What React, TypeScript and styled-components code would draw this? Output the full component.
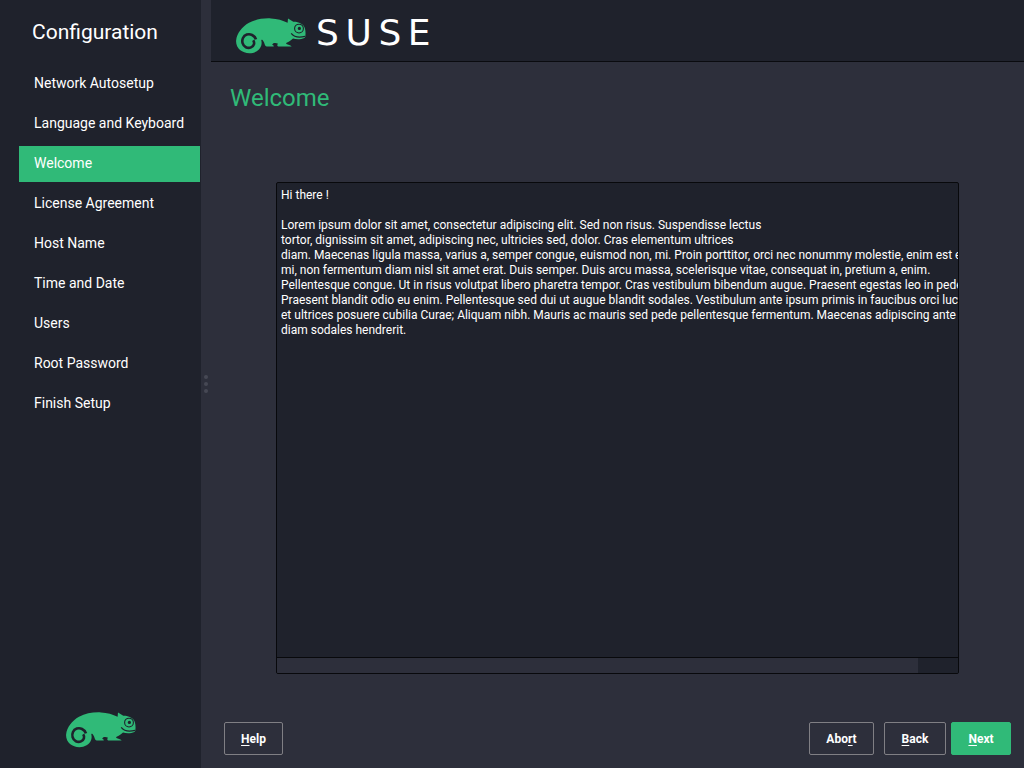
import React from "react";
import styled, { createGlobalStyle } from "styled-components";

const Global = createGlobalStyle`
  html, body { margin: 0; padding: 0; height: 100%; background: #2d2f3b; }
  #root { height: 100%; }
  body { font-family: Roboto, "Liberation Sans", sans-serif; overflow: hidden; }
`;

const Shell = styled.div`
  width: 1024px; height: 768px; display: flex; position: relative; overflow: hidden;
  background: #2d2f3b; color: #fff;
`;
const Sidebar = styled.aside`
  width: 201px; flex: none; background: #1f222c; display: flex; flex-direction: column;
  padding-left: 19px; box-sizing: border-box;
`;
const SideTitle = styled.h1`
  margin: 18px 0 0 13px; font-size: 21px; font-weight: 400; line-height: 28px; height: 28px;
`;
const Steps = styled.ul`
  list-style: none; margin: 20px 0 0; padding: 0; display: flex; flex-direction: column; gap: 4px;
`;
const Step = styled.li<{ $active?: boolean }>`
  height: 36px; width: 181px; line-height: 34px; padding-left: 15px; box-sizing: border-box;
  font-size: 14px; background: ${(p) => (p.$active ? "#30ba78" : "transparent")};
`;
const SideLogo = styled.div`
  margin-top: auto; height: 56px; margin-left: 47px; display: flex;
  svg { display: block; }
`;
const Grip = styled.div`
  position: absolute; left: 204px; top: 375px; display: flex; flex-direction: column; gap: 3px;
  span { width: 4px; height: 4px; border-radius: 50%; background: #464854; display: block; }
`;
const Main = styled.main`
  flex: 1; margin-left: 10px; display: flex; flex-direction: column; min-width: 0;
`;
const Banner = styled.header`
  height: 62px; box-sizing: border-box; background: #1f222c; border-bottom: 1px solid #0a0b0f;
  display: flex; align-items: center; padding-left: 25px; flex: none;
`;
const BannerLogo = styled.div`
  width: 70px; height: 36px; margin-top: 11px; flex: none;
  svg { display: block; }
`;
const Wordmark = styled.span`
  font-family: "DejaVu Sans", sans-serif; font-weight: 400; font-size: 36px; letter-spacing: 6.6px;
  line-height: 1; color: #fff; margin: 5px 0 0 10px;
`;
const Heading = styled.h2`
  margin: 22px 0 0 19px; font-size: 24px; font-weight: 400; line-height: 28px; color: #30ba78; height: 28px; flex: none;
`;
const TextBox = styled.section`
  margin: 70px 0 0 65px; width: 683px; height: 492px; box-sizing: border-box; flex: none;
  border: 1px solid #08090c; border-radius: 2px; background: #1f222c;
  display: flex; flex-direction: column; overflow: hidden;
`;
const Viewport = styled.div`
  flex: 1; min-height: 0; overflow: hidden; padding: 5px 0 0 4px; font-size: 12px; line-height: 15px; color: #fff; white-space: pre;
`;
const ScrollTrack = styled.div`
  height: 15px; flex: none; border-top: 1px solid #08090c; background: #1f222c;
`;
const ScrollThumb = styled.div`
  height: 100%; width: 641px; background: #2d2f3b;
`;
const Footer = styled.footer`
  margin: 48px 13px 0; display: flex; align-items: center; gap: 10px;
`;
const Spacer = styled.div` flex: 1; `;
const Btn = styled.div<{ $w: number; $primary?: boolean }>`
  width: ${(p) => p.$w}px; height: 33px; box-sizing: border-box; border-radius: 2px;
  border: 1px solid ${(p) => (p.$primary ? "#30ba78" : "#807f84")};
  background: ${(p) => (p.$primary ? "#30ba78" : "transparent")};
  display: flex; align-items: center; justify-content: center;
  font-size: 12px; font-weight: 700; color: #fff; u { text-underline-offset: 2px; }
`;
const NextBtn = styled(Btn)` margin-left: -5px; `;

const Chameleon = () => (
  <svg width={70} height={36} viewBox="0 0 70 36" aria-hidden="true">
    <path
      fill="#30ba78"
      d="M0.1 22.5C0.8 15.5 6 8.6 13 4.8C19.5 1.4 27 0 35 0.4C41 0.8 47 2.2 51.6 4.8L52 0.4L57.3 3.8C62.4 3.6 67.4 6 68.8 10C69.6 12.6 69.8 16 69.2 19L68.4 20C65 21.6 60.8 21.8 57 20.6C55.2 22.6 52.6 23.8 50.6 24.8C49.8 25.4 49.8 25.8 51 26.2C53 27 55 27.4 55.6 28.4L42.2 28.4C41 28.2 41 26.6 42 25.8C41 25 39 24.8 37.4 25.2C36.2 26 35.8 26.8 37.2 27.2C37.8 27.6 38 28 37.6 28.4L30.8 28.5C29.6 28.4 29 27.2 28.6 26C28 24.2 27.2 22.4 26.2 21.8C25.4 21.4 25.1 21.8 25.4 22.8C25.7 24.4 25.8 26 25.2 27.8C23.6 32.6 18.6 35.2 13.4 35.2C6 35.2 -0.4 30.2 0.1 22.5Z"
    />
    <g fill="none" stroke="#1f222c">
      <path strokeWidth="2.6" d="M20 21.4C18.4 17 14.2 15.6 10.8 16.6C7.2 17.8 5.6 21.6 6.6 25.2C7.6 29 11.6 30.8 15 29.4C18 28.2 19 24.8 17.2 22.2" />
      <circle cx="63" cy="10.6" r="4.4" strokeWidth="1.1" />
      <path strokeWidth="1.2" d="M55.2 15.4C58 19 63 20 69 18.4" />
    </g>
    <circle cx="63.4" cy="10.4" r="1.6" fill="#1f222c" />
  </svg>
);

const lines = [
  "Hi there !",
  "",
  "Lorem ipsum dolor sit amet, consectetur adipiscing elit. Sed non risus. Suspendisse lectus",
  "tortor, dignissim sit amet, adipiscing nec, ultricies sed, dolor. Cras elementum ultrices",
  "diam. Maecenas ligula massa, varius a, semper congue, euismod non, mi. Proin porttitor, orci nec nonummy molestie, enim est eleifend",
  "mi, non fermentum diam nisl sit amet erat. Duis semper. Duis arcu massa, scelerisque vitae, consequat in, pretium a, enim.",
  "Pellentesque congue. Ut in risus volutpat libero pharetra tempor. Cras vestibulum bibendum augue. Praesent egestas leo in pede.",
  "Praesent blandit odio eu enim. Pellentesque sed dui ut augue blandit sodales. Vestibulum ante ipsum primis in faucibus orci luctus",
  "et ultrices posuere cubilia Curae; Aliquam nibh. Mauris ac mauris sed pede pellentesque fermentum. Maecenas adipiscing ante non",
  "diam sodales hendrerit.",
];

const steps = ["Network Autosetup", "Language and Keyboard", "Welcome", "License Agreement", "Host Name", "Time and Date", "Users", "Root Password", "Finish Setup"];

export default function App() {
  return (
    <Shell>
      <Global />
      <Sidebar>
        <SideTitle>Configuration</SideTitle>
        <Steps>
          {steps.map((s) => (
            <Step key={s} $active={s === "Welcome"}>{s}</Step>
          ))}
        </Steps>
        <SideLogo><Chameleon /></SideLogo>
      </Sidebar>
      <Grip><span /><span /><span /></Grip>
      <Main>
        <Banner>
          <BannerLogo><Chameleon /></BannerLogo>
          <Wordmark>SUSE</Wordmark>
        </Banner>
        <Heading>Welcome</Heading>
        <TextBox>
          <Viewport>{lines.join("\n")}</Viewport>
          <ScrollTrack><ScrollThumb /></ScrollTrack>
        </TextBox>
        <Footer>
          <Btn $w={59}><span><u>H</u>elp</span></Btn>
          <Spacer />
          <Btn $w={65}><span>Abo<u>r</u>t</span></Btn>
          <Btn $w={62}><span><u>B</u>ack</span></Btn>
          <NextBtn $w={60} $primary><span><u>N</u>ext</span></NextBtn>
        </Footer>
      </Main>
    </Shell>
  );
}
